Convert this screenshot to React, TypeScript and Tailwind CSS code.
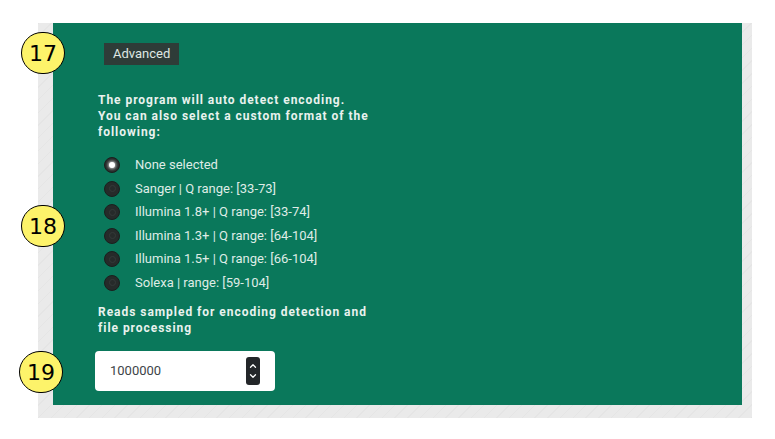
import { ChevronUp, ChevronDown } from 'lucide-react'

const formats = [
  'None selected',
  'Sanger | Q range: [33-73]',
  'Illumina 1.8+ | Q range: [33-74]',
  'Illumina 1.3+ | Q range: [64-104]',
  'Illumina 1.5+ | Q range: [66-104]',
  'Solexa | range: [59-104]',
]

// yellow numbered callout drawn over the screenshot
function Marker({ n, className }: { n: number; className: string }) {
  return (
    <div
      className={`absolute w-[44px] h-[42px] rounded-full bg-[#fdf36a] border-[1.5px] border-black flex items-center justify-center text-[22px] text-black font-['DejaVu_Sans',sans-serif] ${className}`}
    >
      {n}
    </div>
  )
}

function Radio({ checked }: { checked: boolean }) {
  return (
    <span className="w-[16px] h-[16px] rounded-full bg-[#262b2a] border border-[#1b1f1e] flex items-center justify-center shrink-0">
      {checked ? (
        <span className="w-[6px] h-[6px] rounded-full bg-white shadow-[0_0_3px_1px_rgba(255,255,255,0.7)]" />
      ) : (
        <span className="w-[7px] h-[7px] rounded-full border border-[#343a39]" />
      )}
    </span>
  )
}

export default function App() {
  return (
    <div className="relative w-[775px] h-[439px] bg-white pt-[23px] pl-[38px] font-['Roboto',sans-serif]">
      <div className="w-[714px] pl-[15px] pr-[10px] pb-[13px] bg-[#e8e8e8] bg-[repeating-linear-gradient(135deg,#e5e5e5_0px,#e5e5e5_1px,#eaeaea_1px,#eaeaea_9px)]">
        <div className="h-[382px] bg-[#0a785b] pl-[45px] pt-[20px] flex flex-col items-start">
          <div className="ml-[6px] h-[22px] px-[9px] bg-[#2e3c38] text-[#dfe7e3] text-[13px] flex items-center">
            Advanced
          </div>

          <p className="mt-[27px] text-[12px] leading-[16px] font-bold tracking-[0.08em] text-[#e9f2ee]">
            The program will auto detect encoding.
            <br />
            You can also select a custom format of the
            <br />
            following:
          </p>

          <div className="mt-[17px] ml-[6px] flex flex-col gap-[7.5px]">
            {formats.map((f, i) => (
              <label key={f} className="flex items-center gap-[15px] h-[16px]">
                <Radio checked={i === 0} />
                <span className="text-[13px] text-[#dfece6]">{f}</span>
              </label>
            ))}
          </div>

          <p className="mt-[13px] text-[12px] leading-[16px] font-bold tracking-[0.08em] text-[#e9f2ee]">
            Reads sampled for encoding detection and
            <br />
            file processing
          </p>

          <div className="mt-[15px] -ml-[3px] w-[180px] h-[40px] bg-white rounded-[4px] flex items-center pl-[15px] pr-[15px]">
            <span className="flex-1 text-[13px] text-[#3d4448]">1000000</span>
            <div className="w-[14px] h-[28px] rounded-[3px] bg-[#232629] flex flex-col items-center justify-center text-white">
              <ChevronUp size={10} strokeWidth={3} />
              <ChevronDown size={10} strokeWidth={3} />
            </div>
          </div>
        </div>
      </div>

      <Marker n={17} className="left-[21px] top-[32px]" />
      <Marker n={18} className="left-[21px] top-[205px]" />
      <Marker n={19} className="left-[19px] top-[351px]" />
    </div>
  )
}
